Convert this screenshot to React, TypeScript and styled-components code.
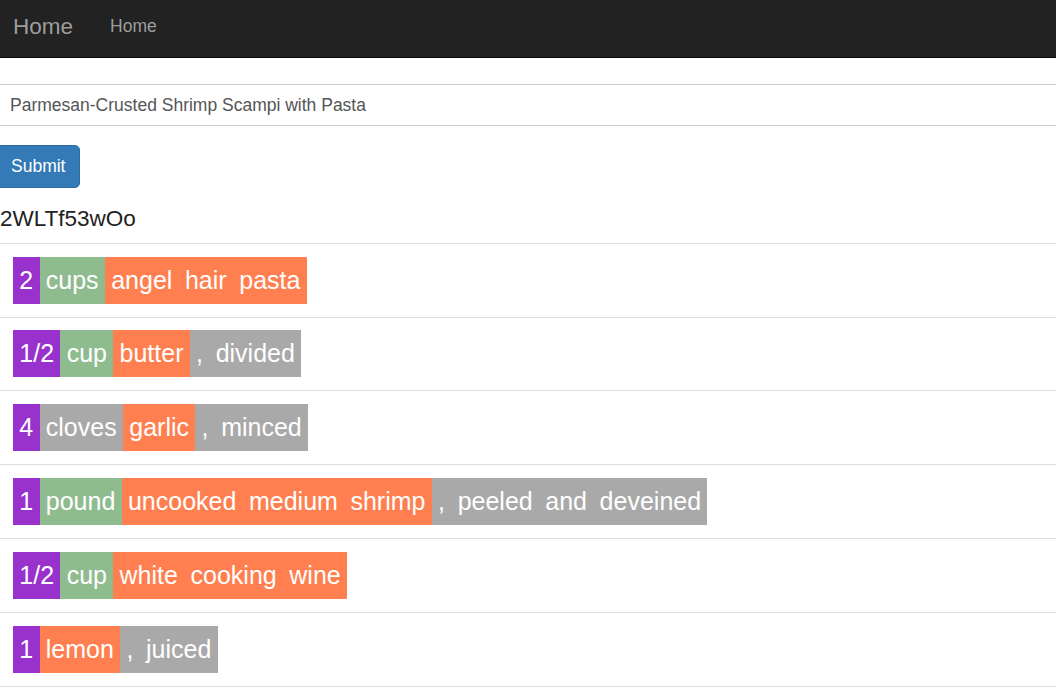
import React from "react";
import styled, { createGlobalStyle } from "styled-components";

const GlobalStyle = createGlobalStyle`
  html, body { margin: 0; padding: 0; background: #fff; }
  body {
    font-family: "Liberation Sans", Arial, Helvetica, sans-serif;
    color: #333;
    font-size: 17.5px;
    line-height: 1.42857;
    overflow: hidden;
  }
  * { box-sizing: border-box; }
`;

const Navbar = styled.nav`
  height: 58px;
  background: #222;
  border-bottom: 1px solid #080808;
  display: flex;
  align-items: flex-start;
  padding: 14px 0 0 13px;
`;

const Brand = styled.a`
  font-size: 22.5px;
  line-height: 25px;
  color: #9d9d9d;
  text-decoration: none;
  margin-right: 37px;
`;

const NavLink = styled.a`
  font-size: 17.5px;
  line-height: 25px;
  color: #9d9d9d;
  text-decoration: none;
`;

const Main = styled.main`
  display: flex;
  flex-direction: column;
  align-items: flex-start;
  padding-top: 26px;
`;

const TextInput = styled.input`
  width: 100%;
  height: 42px;
  border: 1px solid #ccc;
  border-left: none;
  border-right: none;
  padding: 0 10px;
  font-family: inherit;
  font-size: 17.5px;
  color: #555;
  outline: none;
  background: #fff;
`;

const SubmitButton = styled.button`
  margin: 19px 0 0 -4px;
  height: 43px;
  padding: 0 14px 1px 14px;
  background: #337ab7;
  border: 1px solid #2e6da4;
  border-radius: 5px;
  color: #fff;
  font-family: inherit;
  font-size: 17.5px;
  line-height: 25px;
  cursor: pointer;
`;

const RecipeId = styled.h4`
  margin: 19px 0 0 0;
  font-size: 22.5px;
  line-height: 24.75px;
  font-weight: 400;
  color: #222;
`;

const List = styled.ul`
  list-style: none;
  margin: 11px 0 0 0;
  padding: 0;
  width: 100%;
`;

const Row = styled.li`
  display: flex;
  padding: 12.92px 13px;
  border-top: 1px solid #ddd;
  &:last-child { border-bottom: 1px solid #ddd; }
`;

const Tag = styled.div`
  display: flex;
  font-size: 25px;
  line-height: 46px;
  color: #fff;
`;

type Kind = "qty" | "unit" | "name" | "note";
const colors: Record<Kind, string> = {
  qty: "#9932cc",
  unit: "#8fbc8f",
  name: "#ff7f50",
  note: "#a9a9a9",
};

const Segment = styled.span<{ $kind: Kind }>`
  display: inline-flex;
  padding-bottom: 1px;
  background: ${(p) => colors[p.$kind]};
`;

const Token = styled.span`
  padding: 0 6.3px;
  white-space: pre;
`;

type Seg = { kind: Kind; words: string[] };

const rows: Seg[][] = [
  [
    { kind: "qty", words: ["2"] },
    { kind: "unit", words: ["cups"] },
    { kind: "name", words: ["angel", "hair", "pasta"] },
  ],
  [
    { kind: "qty", words: ["1/2"] },
    { kind: "unit", words: ["cup"] },
    { kind: "name", words: ["butter"] },
    { kind: "note", words: [",", "divided"] },
  ],
  [
    { kind: "qty", words: ["4"] },
    { kind: "note", words: ["cloves"] },
    { kind: "name", words: ["garlic"] },
    { kind: "note", words: [",", "minced"] },
  ],
  [
    { kind: "qty", words: ["1"] },
    { kind: "unit", words: ["pound"] },
    { kind: "name", words: ["uncooked", "medium", "shrimp"] },
    { kind: "note", words: [",", "peeled", "and", "deveined"] },
  ],
  [
    { kind: "qty", words: ["1/2"] },
    { kind: "unit", words: ["cup"] },
    { kind: "name", words: ["white", "cooking", "wine"] },
  ],
  [
    { kind: "qty", words: ["1"] },
    { kind: "name", words: ["lemon"] },
    { kind: "note", words: [",", "juiced"] },
  ],
];

export default function App() {
  return (
    <>
      <GlobalStyle />
      <Navbar>
        <Brand href="#">Home</Brand>
        <NavLink href="#">Home</NavLink>
      </Navbar>
      <Main>
        <TextInput defaultValue="Parmesan-Crusted Shrimp Scampi with Pasta" />
        <SubmitButton>Submit</SubmitButton>
        <RecipeId>2WLTf53wOo</RecipeId>
        <List>
          {rows.map((segs, i) => (
            <Row key={i}>
              <Tag>
                {segs.map((s, j) => (
                  <Segment key={j} $kind={s.kind}>
                    {s.words.map((w, k) => (
                      <Token key={k}>{w}</Token>
                    ))}
                  </Segment>
                ))}
              </Tag>
            </Row>
          ))}
        </List>
      </Main>
    </>
  );
}
